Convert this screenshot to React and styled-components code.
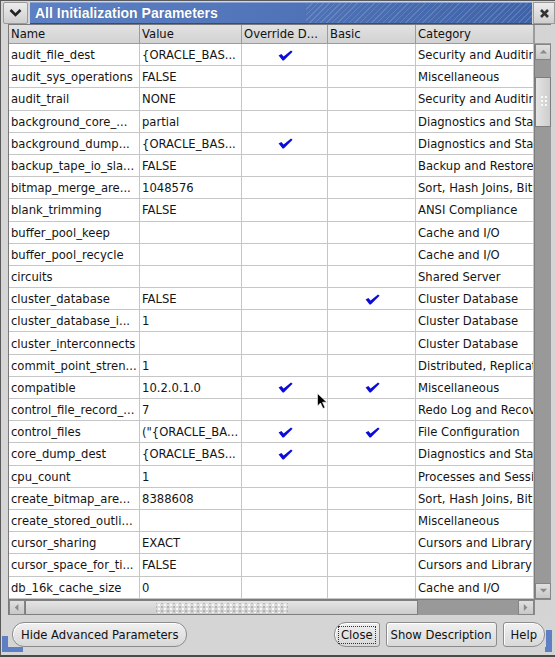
import React from "react";
import styled, { createGlobalStyle } from "styled-components";

const GlobalStyle = createGlobalStyle`
  html, body { margin: 0; padding: 0; background: #d4d4d4; }
  body { font-family: "DejaVu Sans", "Liberation Sans", sans-serif; }
`;

const COLS = [131, 102, 86, 88, 118];
const ROW_H = 22.2;
const TRACK = "#999999";

const rows = [
  ["audit_file_dest", "{ORACLE_BAS...", true, false, "Security and Auditing"],
  ["audit_sys_operations", "FALSE", false, false, "Miscellaneous"],
  ["audit_trail", "NONE", false, false, "Security and Auditing"],
  ["background_core_...", "partial", false, false, "Diagnostics and Statistics"],
  ["background_dump...", "{ORACLE_BAS...", true, false, "Diagnostics and Statistics"],
  ["backup_tape_io_sla...", "FALSE", false, false, "Backup and Restore"],
  ["bitmap_merge_are...", "1048576", false, false, "Sort, Hash Joins, Bitmap"],
  ["blank_trimming", "FALSE", false, false, "ANSI Compliance"],
  ["buffer_pool_keep", "", false, false, "Cache and I/O"],
  ["buffer_pool_recycle", "", false, false, "Cache and I/O"],
  ["circuits", "", false, false, "Shared Server"],
  ["cluster_database", "FALSE", false, true, "Cluster Database"],
  ["cluster_database_i...", "1", false, false, "Cluster Database"],
  ["cluster_interconnects", "", false, false, "Cluster Database"],
  ["commit_point_stren...", "1", false, false, "Distributed, Replication"],
  ["compatible", "10.2.0.1.0", true, true, "Miscellaneous"],
  ["control_file_record_...", "7", false, false, "Redo Log and Recovery"],
  ["control_files", "(\"{ORACLE_BA...", true, true, "File Configuration"],
  ["core_dump_dest", "{ORACLE_BAS...", true, false, "Diagnostics and Statistics"],
  ["cpu_count", "1", false, false, "Processes and Sessions"],
  ["create_bitmap_are...", "8388608", false, false, "Sort, Hash Joins, Bitmap"],
  ["create_stored_outli...", "", false, false, "Miscellaneous"],
  ["cursor_sharing", "EXACT", false, false, "Cursors and Library Cache"],
  ["cursor_space_for_ti...", "FALSE", false, false, "Cursors and Library Cache"],
  ["db_16k_cache_size", "0", false, false, "Cache and I/O"],
];

const Window = styled.div`
  position: relative;
  width: 555px;
  height: 657px;
  box-sizing: border-box;
  background: #d5d5d5;
  border-left: 1px solid #5a5a5a;
  border-top: 1px solid #5a5a5a;
  border-bottom: 2px solid #4a4a4a;
  display: flex;
  flex-direction: column;
  overflow: hidden;
`;

const TitleBar = styled.div`
  display: flex;
  align-items: stretch;
  height: 23px;
  padding: 1px 0 0 2px;
  box-sizing: border-box;
`;

const MenuButton = styled.div`
  width: 23px;
  margin-right: 2px;
  background: linear-gradient(#ececec, #cfcfcf);
  border: 1px solid #9a9a9a;
  border-radius: 2px;
  display: flex;
  align-items: center;
  justify-content: center;
`;

const TitleArea = styled.div`
  flex: 1;
  display: flex;
  align-items: center;
  padding-left: 5px;
  background:
    repeating-linear-gradient(135deg, rgba(255,255,255,0.14) 0 1px, transparent 1px 4px) right / 45% 100% no-repeat,
    linear-gradient(90deg, #5c80c3 0%, #5174b8 50%, #3f63a8 100%);
  border-top: 1px solid #8aa4d6;
  border-bottom: 1px solid #2d4c8a;
`;

const Title = styled.span`
  font-family: "Liberation Sans", Arial, sans-serif;
  font-weight: bold;
  font-size: 14px;
  color: #ffffff;
  text-shadow: 0 0 1px rgba(0,0,0,0.3);
`;

const CloseButton = styled.div`
  width: 20px;
  margin-left: 1px;
  background: linear-gradient(#ececec, #cfcfcf);
  border: 1px solid #9a9a9a;
  display: flex;
  align-items: center;
  justify-content: center;
`;

const Content = styled.div`
  flex: 1;
  display: flex;
  flex-direction: column;
  padding: 0 4px 0 7px;
`;

const TableArea = styled.div`
  display: grid;
  grid-template-columns: 525px 17px;
  grid-template-rows: 19px 555px 16px;
  border-left: 1px solid #7a7a7a;
  border-top: 1px solid #7a7a7a;
`;

const HeaderRow = styled.div`
  display: grid;
  grid-template-columns: ${COLS.map((c) => c + "px").join(" ")};
`;

const HeaderCell = styled.div`
  background: linear-gradient(#e2e2e2, #d2d2d2);
  border-right: 1px solid #9c9c9c;
  border-bottom: 1px solid #9c9c9c;
  font-size: 11.6px;
  color: #111;
  padding-left: 2px;
  line-height: 18px;
  white-space: nowrap;
  overflow: hidden;
`;

const HeaderCorner = styled.div`
  background: #d4d4d4;
  border-left: 1px solid #9c9c9c;
  border-bottom: 1px solid #9c9c9c;
`;

const Viewport = styled.div`
  overflow: hidden;
  background: #ffffff;
`;

const Row = styled.div`
  display: grid;
  grid-template-columns: ${COLS.map((c) => c + "px").join(" ")};
  height: ${ROW_H}px;
`;

const Cell = styled.div`
  box-sizing: border-box;
  border-right: 1px solid #c6c6c6;
  border-bottom: 1px solid #c6c6c6;
  font-size: 11.6px;
  color: #141414;
  padding-left: 2px;
  padding-top: 1px;
  white-space: nowrap;
  overflow: hidden;
  display: flex;
  align-items: center;
  justify-content: ${(p) => (p.$center ? "center" : "flex-start")};
`;

const VScroll = styled.div`
  display: flex;
  flex-direction: column;
  min-height: 0;
  overflow: hidden;
  border-left: 1px solid #7c7c7c;
  background: ${TRACK};
`;

const ArrowBtn = styled.div`
  flex: none;
  width: ${(p) => (p.$h ? "16px" : "auto")};
  height: ${(p) => (p.$h ? "auto" : "16px")};
  background: linear-gradient(#e0e0e0, #c8c8c8);
  border: 1px solid #858585;
  box-sizing: border-box;
  display: flex;
  align-items: center;
  justify-content: center;
`;

const VTrack = styled.div`
  flex: 1;
  min-height: 0;
  display: flex;
  flex-direction: column;
  padding-top: 17px;
  background: ${TRACK};
`;

const VThumb = styled.div`
  position: relative;
  flex: none;
  height: 50px;
  background: linear-gradient(90deg, #e4e4e4, #cdcdcd);
  border: 1px solid #7e7e7e;
  box-sizing: border-box;
`;

const VGrip = styled.div`
  position: absolute;
  left: 4px;
  top: 17px;
  width: 8px;
  height: 12px;
  background: radial-gradient(circle, #f8f8f8 0.9px, transparent 1.2px) 0 0 / 4px 4px;
`;

const HScroll = styled.div`
  display: flex;
  border-top: 1px solid #7c7c7c;
  background: ${TRACK};
`;

const HTrack = styled.div`
  flex: 1;
  display: flex;
  background: ${TRACK};
`;

const HThumb = styled.div`
  flex: none;
  width: 393px;
  position: relative;
  background: linear-gradient(#e4e4e4, #cdcdcd);
  border: 1px solid #7e7e7e;
  box-sizing: border-box;
`;

const Grip = styled.div`
  position: absolute;
  left: 130px;
  top: 2px;
  width: 132px;
  height: 10px;
  background:
    radial-gradient(circle, #f8f8f8 0.8px, transparent 1.1px) 0 0 / 6px 4px,
    radial-gradient(circle, #a8a8a8 0.6px, transparent 1px) 3px 2px / 6px 4px;
`;

const Corner = styled.div`
  background: #d4d4d4;
  border-top: 1px solid #8a8a8a;
  border-left: 1px solid #8a8a8a;
`;

const ButtonBar = styled.div`
  display: flex;
  align-items: center;
  padding: 7px 0 0 4px;
  height: 25px;
`;

const Spacer = styled.div`
  flex: ${(p) => (p.$w ? "none" : 1)};
  width: ${(p) => (p.$w ? p.$w + "px" : "auto")};
`;

const Button = styled.button`
  font-family: "DejaVu Sans", sans-serif;
  font-size: 11.6px;
  color: #111;
  height: 25px;
  padding: 0 ${(p) => p.$px || 8}px;
  margin-left: ${(p) => p.$ml || 0}px;
  background: linear-gradient(#f0f0f0, #d8d8d8);
  border: 1px solid #8c8c8c;
  border-radius: ${(p) => p.$radius || "12px"};
  box-shadow: inset 1px 1px 0 #ffffff;
  display: flex;
  align-items: center;
  justify-content: center;
`;

const FocusLabel = styled.span`
  border: 1px dotted #333;
  padding: 1px 2px;
`;

const Cursor = styled.svg`
  position: absolute;
  left: 316px;
  top: 392px;
`;

const Accent = styled.div`
  position: absolute;
  ${(p) => (p.$right ? "right: 3px;" : "left: 1px;")}
  bottom: 3px;
  width: ${(p) => (p.$right ? 7 : 21)}px;
  height: ${(p) => (p.$right ? 22 : 16)}px;
  border-${(p) => (p.$right ? "right" : "left")}: 6px solid #5f7fc4;
  border-bottom: 5px solid #5f7fc4;
  box-sizing: border-box;
`;

const Check = () => (
  <svg width="15" height="11" viewBox="0 0 15 11">
    <path d="M0.6 5.6 L3.4 4 L5.6 6.6 L13 0.5 L14.6 1.8 L5.8 10.6 L4.6 10.6 Z" fill="#0c0cd8" />
  </svg>
);

const Tri = ({ dir }) => {
  const pts = {
    up: "1,6 5,2 9,6",
    down: "1,2 5,6 9,2",
    left: "6,1 2,5 6,9",
    right: "2,1 6,5 2,9",
  }[dir];
  return (
    <svg width="9" height="9" viewBox="0 0 10 10">
      <polygon points={pts} fill="#8a8a8a" />
    </svg>
  );
};

const headers = ["Name", "Value", "Override D...", "Basic", "Category"];

export default function App() {
  return (
    <>
      <GlobalStyle />
      <Window>
        <TitleBar>
          <MenuButton>
            <svg width="13" height="10" viewBox="0 0 13 10">
              <path d="M1.5 2 L6.5 7 L11.5 2" stroke="#222" strokeWidth="2.6" fill="none" />
            </svg>
          </MenuButton>
          <TitleArea>
            <Title>All Initialization Parameters</Title>
          </TitleArea>
          <CloseButton>
            <svg width="11" height="11" viewBox="0 0 11 11">
              <path d="M2 2 L9 9 M9 2 L2 9" stroke="#333" strokeWidth="2.6" />
            </svg>
          </CloseButton>
        </TitleBar>
        <Content>
          <TableArea>
            <HeaderRow>
              {headers.map((h) => (
                <HeaderCell key={h}>{h}</HeaderCell>
              ))}
            </HeaderRow>
            <HeaderCorner />
            <Viewport>
              {rows.map((r) => (
                <Row key={r[0]}>
                  <Cell>{r[0]}</Cell>
                  <Cell>{r[1]}</Cell>
                  <Cell $center>{r[2] && <Check />}</Cell>
                  <Cell $center>{r[3] && <Check />}</Cell>
                  <Cell>{r[4]}</Cell>
                </Row>
              ))}
            </Viewport>
            <VScroll>
              <ArrowBtn>
                <Tri dir="up" />
              </ArrowBtn>
              <VTrack>
                <VThumb>
                  <VGrip />
                </VThumb>
              </VTrack>
              <ArrowBtn>
                <Tri dir="down" />
              </ArrowBtn>
            </VScroll>
            <HScroll>
              <ArrowBtn $h>
                <Tri dir="left" />
              </ArrowBtn>
              <HTrack>
                <HThumb>
                  <Grip />
                </HThumb>
              </HTrack>
              <ArrowBtn $h>
                <Tri dir="right" />
              </ArrowBtn>
            </HScroll>
            <Corner />
          </TableArea>
          <ButtonBar>
            <Button $px={8}>Hide Advanced Parameters</Button>
            <Spacer />
            <Button $px={3} $radius="12px 3px 3px 12px">
              <FocusLabel>Close</FocusLabel>
            </Button>
            <Button $px={4} $ml={6} $radius="3px">
              Show Description
            </Button>
            <Button $px={7} $ml={6} $radius="3px 12px 12px 3px">
              Help
            </Button>
            <Spacer $w={6} />
          </ButtonBar>
        </Content>
        <Cursor width="11" height="17" viewBox="0 0 11 17">
          <path d="M0.5 0.5 L0.5 13 L3.5 10 L6 15.5 L8 14.5 L5.5 9.2 L9.8 9.2 Z" fill="#000" stroke="#fff" strokeWidth="0.6" />
        </Cursor>
        <Accent />
        <Accent $right />
      </Window>
    </>
  );
}
